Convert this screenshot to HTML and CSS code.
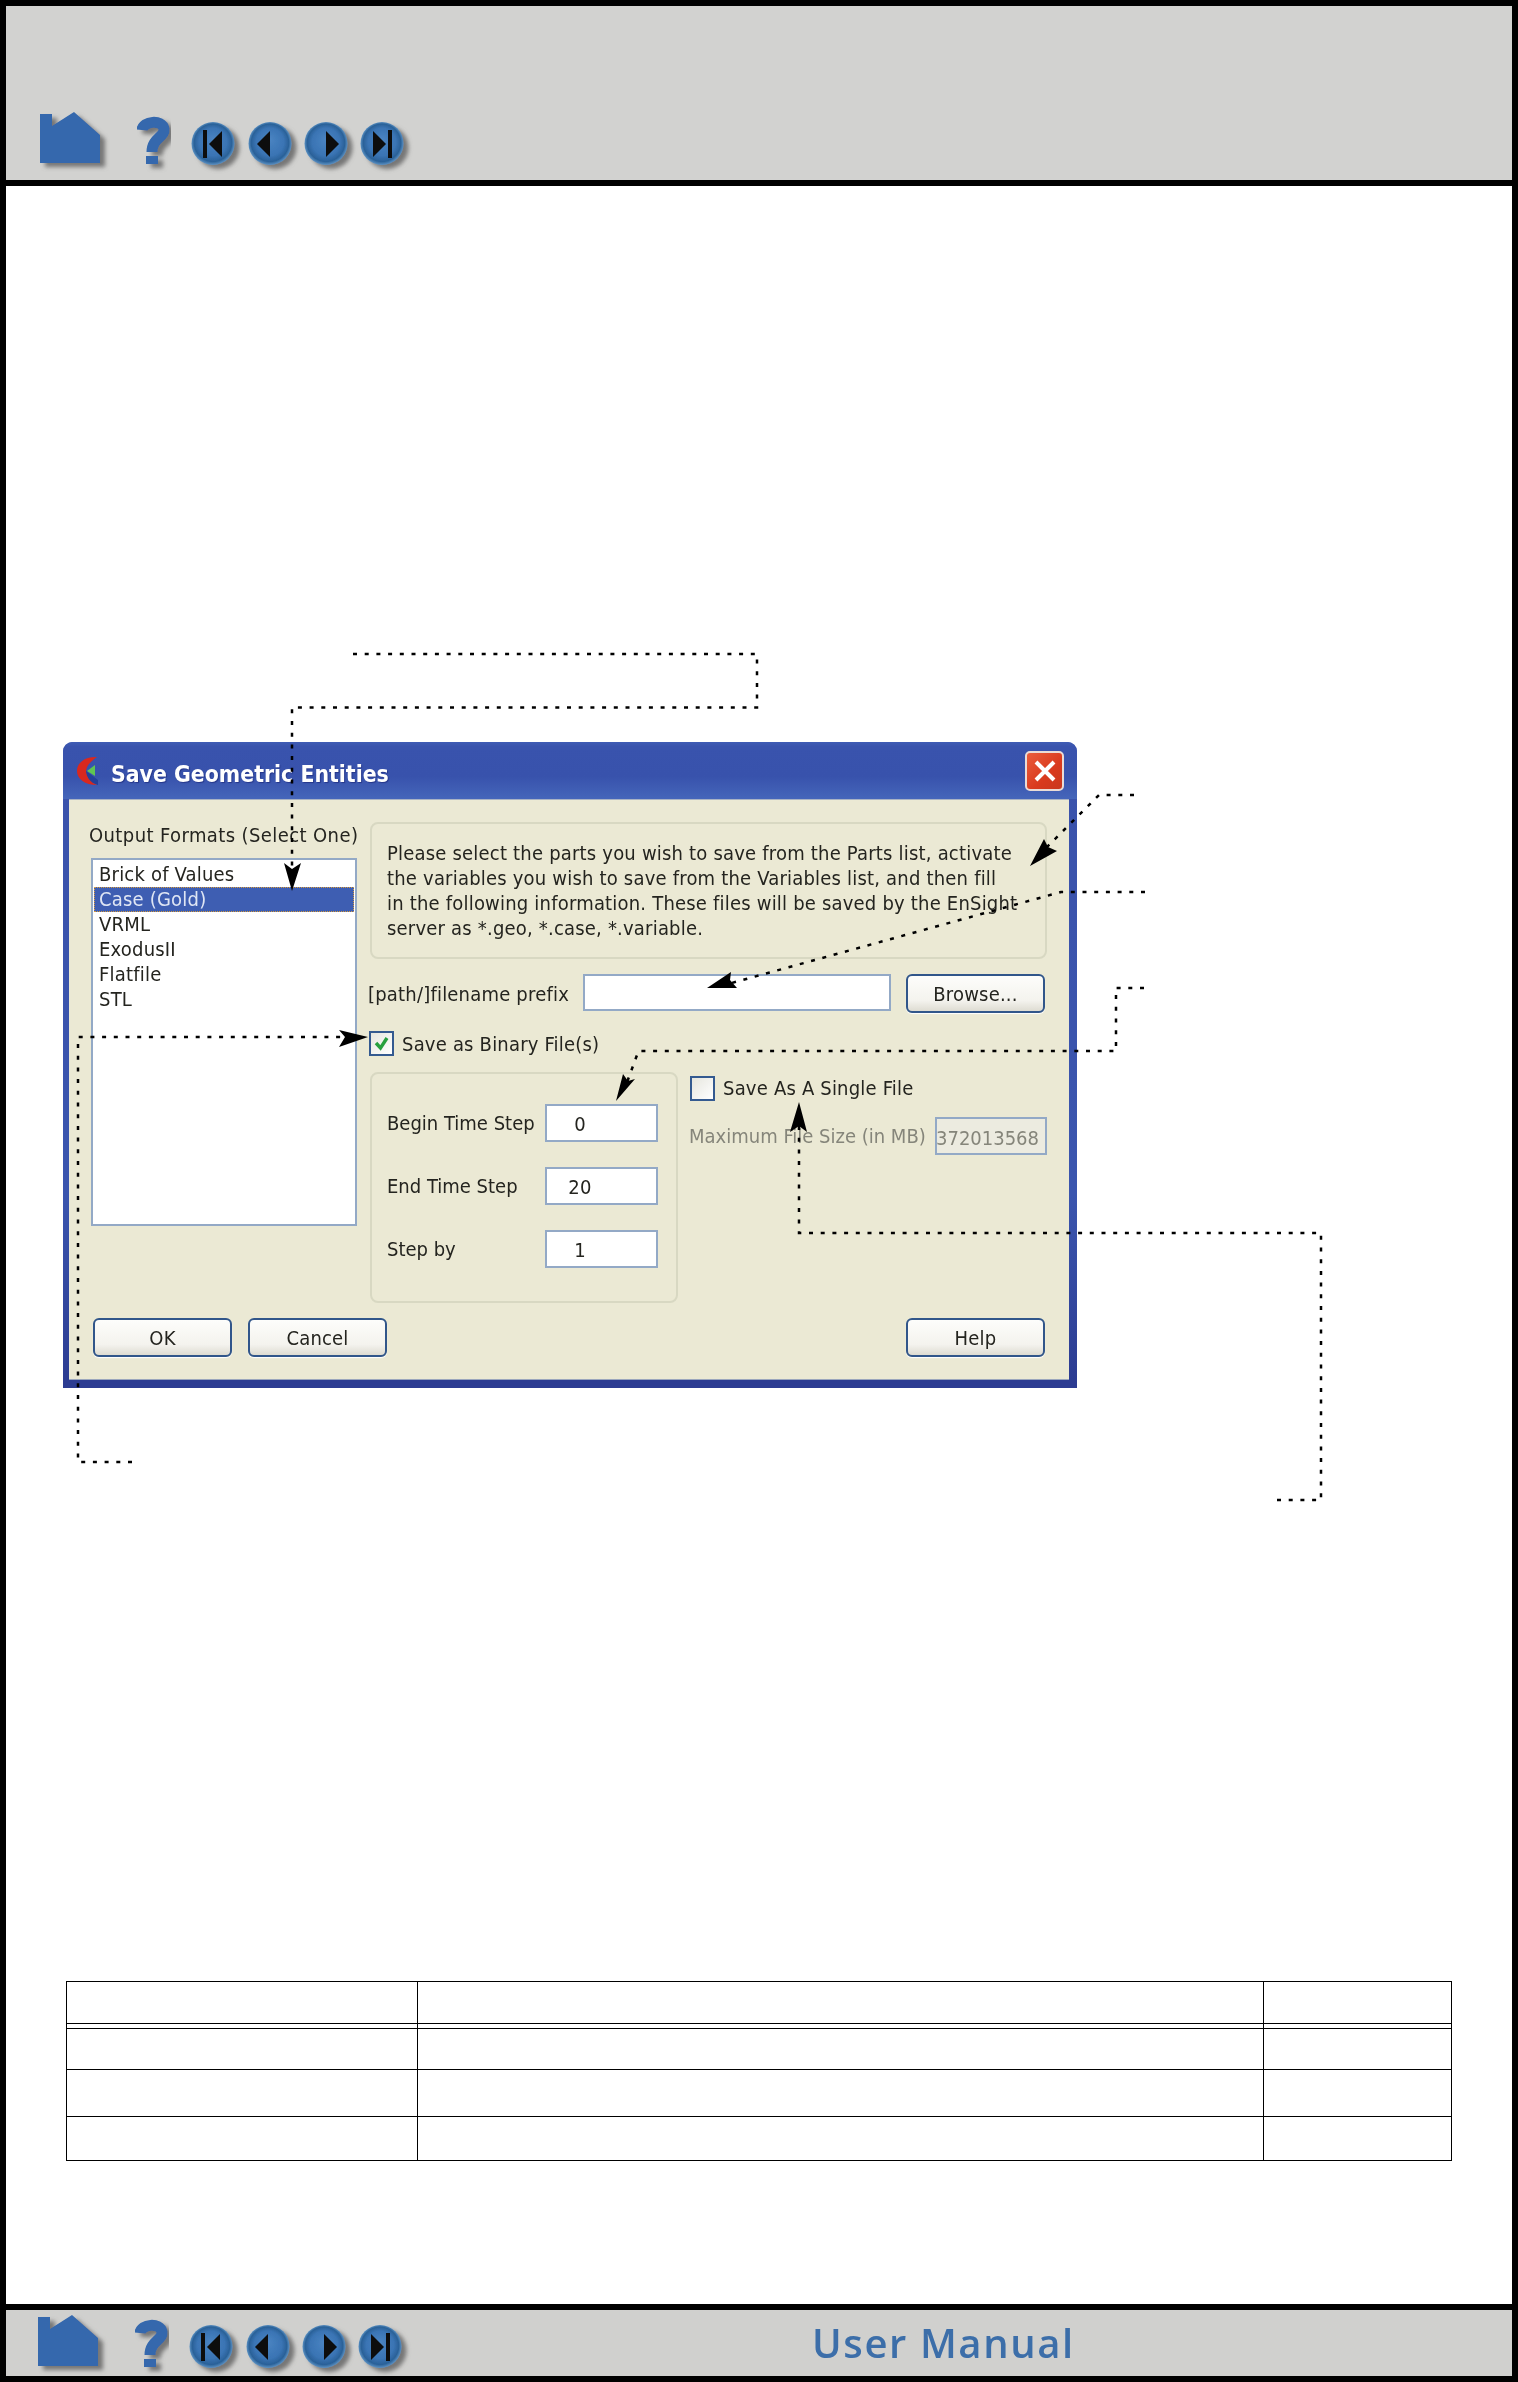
FILE: index.html
```html
<!DOCTYPE html>
<html lang="en">
<head>
<meta charset="utf-8">
<title>Save Geometric Entities</title>
<link rel="stylesheet" href="styles.css">
</head>
<body>
<div class="page">
  <header class="topbar">
    <svg class="nav" width="380" height="70" viewBox="0 0 380 70" aria-hidden="true">
      <defs>
        <radialGradient id="ball" cx="50%" cy="50%" r="52%" fx="50%" fy="40%">
          <stop offset="0" stop-color="#4a84c2"/>
          <stop offset=".62" stop-color="#3a74b4"/>
          <stop offset=".84" stop-color="#2a6198"/>
          <stop offset="1" stop-color="#6aa0d0"/>
        </radialGradient>
        <filter id="soft" x="-20%" y="-20%" width="150%" height="150%">
          <feGaussianBlur in="SourceGraphic" stdDeviation=".6" result="b"/>
          <feDropShadow in="b" dx="5" dy="4" stdDeviation="2" flood-color="#666" flood-opacity=".85"/>
        </filter>
      </defs>
      <g id="navicons">
        <g filter="url(#soft)"><polygon fill="#3468ad" points="6,10 18,10 18,22 40,8 66,31 66,59 6,59"/></g>
        <g filter="url(#soft)">
          <path fill="none" stroke="#3468ad" stroke-width="11" d="M108 26C109 17 128 15 130 25C131 33 118 34 118 48"/>
          <rect fill="#3468ad" x="112" y="52" width="12" height="8"/>
        </g>
        <g filter="url(#soft)">
          <circle cx="179" cy="39.5" r="21.5" fill="url(#ball)"/>
          <rect x="169" y="26" width="4" height="28" fill="#0c0c0c"/>
          <polygon points="175,40 188,27 188,53" fill="#0c0c0c"/>
        </g>
        <g filter="url(#soft)">
          <circle cx="236" cy="39.5" r="21.5" fill="url(#ball)"/>
          <polygon points="223,40 236,27 236,53" fill="#0c0c0c"/>
        </g>
        <g filter="url(#soft)">
          <circle cx="292" cy="39.5" r="21.5" fill="url(#ball)"/>
          <polygon points="292,27 305,40 292,53" fill="#0c0c0c"/>
        </g>
        <g filter="url(#soft)">
          <circle cx="348" cy="39.5" r="21.5" fill="url(#ball)"/>
          <polygon points="339,27 352,40 339,53" fill="#0c0c0c"/>
          <rect x="354" y="26" width="4" height="28" fill="#0c0c0c"/>
        </g>
      </g>
    </svg>
  </header>

  <main class="content">
    <section class="dialog">
      <div class="titlebar">
        <svg class="applogo" width="22" height="30" viewBox="0 0 22 30" aria-hidden="true">
          <path fill="#23409a" d="M21 29C13 27 9 22 9 15L21 24Z"/>
          <path fill="#d8281f" d="M20 1C8 0 0 7 0 15C0 23 8 29 20 29C14 27 10 22 9 16C9 10 14 5 20 1Z"/>
          <polygon fill="#5fc552" points="10,15 18,9 18,20"/>
        </svg>
        <span class="title">Save Geometric Entities</span>
        <span class="close">
          <svg width="24" height="24" viewBox="0 0 24 24" aria-hidden="true"><path d="M3 3L21 21M21 3L3 21" stroke="#fff" stroke-width="4"/></svg>
        </span>
      </div>
      <div class="client">
        <div class="leftcol">
          <div class="ui-text formats-label">Output Formats (Select One)</div>
          <ul class="listbox">
            <li>Brick of Values</li>
            <li class="selected">Case (Gold)</li>
            <li>VRML</li>
            <li>ExodusII</li>
            <li>Flatfile</li>
            <li>STL</li>
          </ul>
        </div>
        <div class="rightcol">
          <div class="group infobox">
            <p>Please select the parts you wish to save from the Parts list, activate</p>
            <p>the variables you wish to save from the Variables list, and then fill</p>
            <p>in the following information. These files will be saved by the EnSight</p>
            <p>server as *.geo, *.case, *.variable.</p>
          </div>
          <div class="prefix-row">
            <span class="ui-text">[path/]filename prefix</span>
            <span class="field prefix-field"></span>
            <span class="button">Browse...</span>
          </div>
          <div class="check-row binary-row">
            <span class="checkbox">
              <svg width="21" height="21" viewBox="0 0 21 21" aria-hidden="true"><path d="M5 10L9.5 15L16 5" fill="none" stroke="#27a03e" stroke-width="3.4"/></svg>
            </span>
            <span class="ui-text">Save as Binary File(s)</span>
          </div>
          <div class="lower-row">
            <div class="group timebox">
              <div class="time-row"><span class="ui-text time-label">Begin Time Step</span><span class="field num-field">0</span></div>
              <div class="time-row"><span class="ui-text time-label">End Time Step</span><span class="field num-field">20</span></div>
              <div class="time-row"><span class="ui-text time-label">Step by</span><span class="field num-field">1</span></div>
            </div>
            <div class="singlebox">
              <div class="check-row">
                <span class="checkbox unchecked"></span>
                <span class="ui-text">Save As A Single File</span>
              </div>
              <div class="size-row">
                <span class="ui-text muted">Maximum File Size (in MB)</span>
                <span class="field size-field">372013568</span>
              </div>
            </div>
          </div>
        </div>
        <div class="actions">
          <span class="button">OK</span>
          <span class="button">Cancel</span>
          <span class="button help">Help</span>
        </div>
      </div>
    </section>

    <table class="data">
      <colgroup><col class="c1"><col class="c2"><col class="c3"></colgroup>
      <thead>
        <tr class="head"><th></th><th></th><th></th></tr>
        <tr class="dbl"><th></th><th></th><th></th></tr>
      </thead>
      <tbody>
        <tr class="r1"><td></td><td></td><td></td></tr>
        <tr class="r2"><td></td><td></td><td></td></tr>
        <tr class="r3"><td></td><td></td><td></td></tr>
      </tbody>
    </table>
  </main>

  <footer class="bottombar">
    <svg class="nav" width="380" height="66" viewBox="0 3 380 66" aria-hidden="true"><use href="#navicons"/></svg>
    <span class="manual">User Manual</span>
  </footer>

  <svg class="leaders" width="1518" height="2382" viewBox="0 0 1518 2382" aria-hidden="true">
    <g class="dots">
      <path d="M353 654H757V707.5H292V870"/>
      <path d="M1134 795H1099L1046 848"/>
      <path d="M1145 892H1061L728 984"/>
      <path d="M1144 988H1116V1051H638.5L626 1085"/>
      <path d="M132 1462H78V1037H345"/>
      <path d="M1277 1500H1321V1233H799V1125"/>
    </g>
    <g class="heads">
      <polygon points="292,891 284,863 292,869 301,863"/>
      <polygon points="1030,866 1044,839 1048,847 1057,851"/>
      <polygon points="707,988 731,972 730,980 737,988"/>
      <polygon points="616,1101 623,1074 628,1081 635,1079"/>
      <polygon points="368,1037 339,1030 345,1037 339,1047"/>
      <polygon points="799,1102 790,1132 799,1126 807,1132"/>
    </g>
  </svg>
</div>
</body>
</html>
```

FILE: styles.css
```css
* { box-sizing: border-box; }

html, body { margin: 0; padding: 0; background: #fff; }

.page {
  position: relative;
  display: grid;
  grid-template-rows: 180px 1fr 72px;
  height: 2382px;
  border: 6px solid #000;
  background: #fff;
}

.nav { display: block; overflow: visible; }

.topbar {
  background: #d2d2d0;
  border-bottom: 6px solid #000;
  padding: 98px 0 0 28px;
}

.content { padding: 556px 0 0 57px; }

.bottombar {
  display: flex;
  background: #d0d0ce;
  border-top: 6px solid #000;
  padding-left: 26px;
}

.manual {
  margin-left: 400px;
  font: 600 40px/66px "Open Sans", sans-serif;
  letter-spacing: 1.6px;
  color: #3c6ea9;
  filter: blur(.6px);
}

/* dialog */
.dialog {
  display: flex;
  flex-direction: column;
  width: 1014px;
  height: 646px;
  padding: 0 8px 8px 6px;
  background: linear-gradient(#3a52ab, #3a55ae 70%, #2c3c92 99%);
  border-radius: 10px 10px 0 0;
  font: 20px/26px "DejaVu Sans Condensed", "DejaVu Sans", sans-serif;
  letter-spacing: .2px;
  color: #24241f;
  filter: blur(.45px);
}

.titlebar {
  display: flex;
  align-items: center;
  flex: 0 0 57px;
  background: linear-gradient(#3f5cb4 0, #3953ad 8%, #3852ac 60%, #4566ba 100%);
  border-radius: 9px 9px 0 0;
  margin: 0 -8px 0 -6px;
  padding: 0 13px 0 14px;
}

.applogo { flex: none; }

.title {
  margin: 7px 0 0 12px;
  font-weight: 700;
  font-size: 22.8px;
  letter-spacing: 0;
  color: #fff;
  text-shadow: 1px 1px 1px #26378a;
}

.close {
  display: flex;
  align-items: center;
  justify-content: center;
  width: 39px;
  height: 40px;
  margin-left: auto;
  background: linear-gradient(135deg, #ea5d3c, #d93a1e 60%, #c9381f);
  border: 2px solid #eadcd6;
  border-radius: 5px;
}

.client {
  flex: 1;
  display: grid;
  grid-template-columns: 268px 677px;
  grid-template-rows: 481px auto;
  column-gap: 13px;
  row-gap: 15px;
  padding: 22px 22px 0 20px;
  background: #ebe9d4;
  border-top: 1px solid #a9b3c4;
  box-shadow: inset 0 -1px 0 #9aa6bd;
}

.ui-text { white-space: nowrap; }

.muted { color: #85857a; letter-spacing: 0; }

.time-label { letter-spacing: 0; }

.formats-label { height: 26px; letter-spacing: .4px; }

.listbox {
  list-style: none;
  width: 266px;
  height: 368px;
  margin: 10px 0 0 2px;
  padding: 2px 1px;
  background: #fff;
  border: 2px solid #93a9c6;
}

.listbox li {
  height: 25px;
  padding-left: 5px;
  line-height: 25px;
}

.listbox .selected {
  background: #3e5eb2;
  color: #dfe6f4;
  outline: 1px dotted #d69a3c;
  outline-offset: -1px;
}

.group {
  border: 2px solid #d8d8c2;
  border-radius: 8px;
}

.infobox {
  height: 137px;
  padding: 17px 0 0 15px;
}

.infobox p {
  margin: 0;
  height: 25px;
  line-height: 25px;
  white-space: nowrap;
}

.prefix-row {
  display: flex;
  align-items: center;
  height: 39px;
  margin: 15px 2px 0 -2px;
}

.field {
  display: block;
  background: #fff;
  border: 2px solid #93a9c6;
}

.prefix-field {
  width: 308px;
  height: 37px;
  margin: 0 15px 0 auto;
  align-self: flex-start;
}

.button {
  display: flex;
  align-items: center;
  justify-content: center;
  width: 139px;
  height: 39px;
  background: linear-gradient(#fdfdfb, #f4f3ee 70%, #dedcd2);
  border: 2px solid #31568a;
  border-radius: 6px;
  box-shadow: 0 1px 1px #fff;
}

.check-row {
  display: flex;
  align-items: center;
  gap: 8px;
}

.binary-row {
  height: 25px;
  margin: 18px 0 0 -1px;
}

.checkbox {
  flex: none;
  display: block;
  width: 25px;
  height: 25px;
  background: linear-gradient(135deg, #e6e6de, #fff);
  border: 2px solid #345a90;
}

.checkbox svg { display: block; }

.lower-row {
  display: flex;
  margin-top: 16px;
}

.timebox {
  display: flex;
  flex-direction: column;
  gap: 25px;
  width: 308px;
  height: 231px;
  padding: 30px 18px 0 15px;
}

.time-row {
  display: flex;
  align-items: center;
  justify-content: space-between;
}

.num-field {
  width: 113px;
  height: 38px;
  padding-right: 43px;
  text-align: center;
  line-height: 36px;
}

.singlebox {
  flex: 1;
  padding: 3px 0 0 12px;
}

.size-row {
  display: flex;
  align-items: center;
  justify-content: space-between;
  margin: 16px 0 0 -1px;
}

.size-field {
  width: 112px;
  height: 38px;
  padding: 2px 0 0;
  background: #ecebe0;
  color: #85857a;
  line-height: 34px;
  letter-spacing: 0;
  text-indent: -1px;
  white-space: nowrap;
}

.actions {
  grid-column: 1 / 3;
  display: flex;
  gap: 16px;
  padding: 0 2px 0 4px;
}

.help { margin-left: auto; }

/* table */
.data {
  width: 1386px;
  margin: 593px 0 0 3px;
  table-layout: fixed;
  border-collapse: separate;
  border-spacing: 0;
  border-top: 1px solid #000;
  border-left: 1px solid #000;
}

.data th, .data td {
  padding: 0;
  border-right: 1px solid #000;
  border-bottom: 1px solid #000;
}

.c1 { width: 351px; }
.c2 { width: 846px; }
.c3 { width: 188px; }

.head { height: 42px; }
.dbl { height: 5px; }
.r1 { height: 41px; }
.r2 { height: 47px; }
.r3 { height: 44px; }

/* leader lines over the dialog */
.leaders {
  position: absolute;
  top: -6px;
  left: -6px;
  pointer-events: none;
}

.dots path {
  fill: none;
  stroke: #000;
  stroke-width: 2.5;
  stroke-dasharray: 4 7.7;
}

.heads polygon { fill: #000; }
```
